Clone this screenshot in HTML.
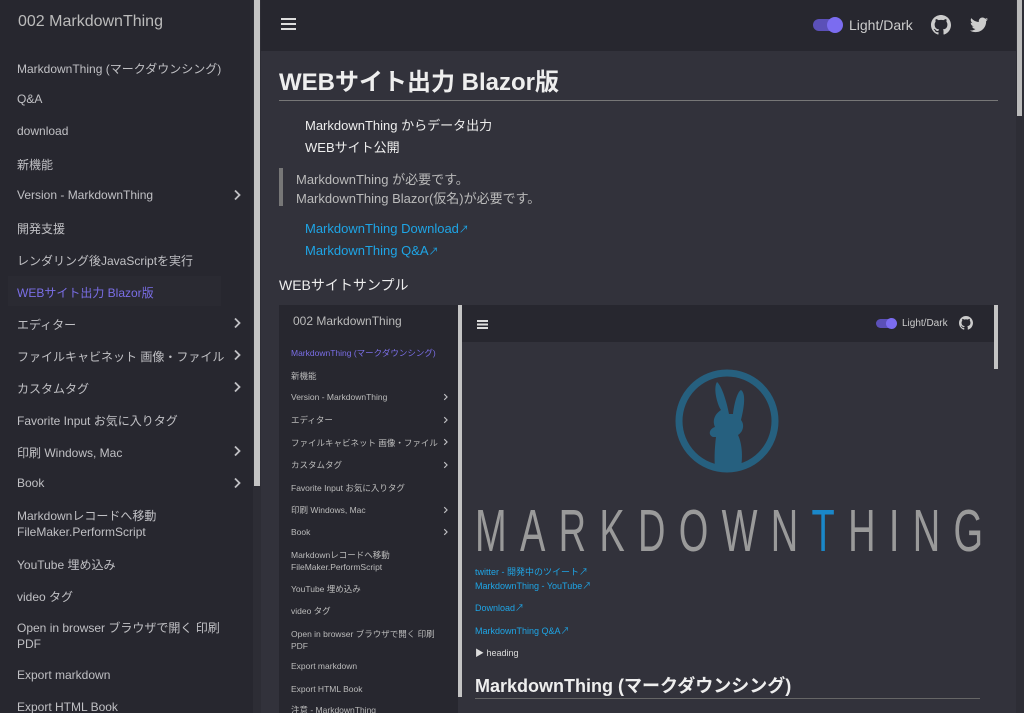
<!DOCTYPE html>
<html><head><meta charset="utf-8"><style>
*{margin:0;padding:0;box-sizing:border-box}
html,body{width:1024px;height:713px;overflow:hidden}
body{background:#32323b;font-family:"Liberation Sans","Noto Sans CJK JP",sans-serif;position:relative;color:#ddd}
.a{position:absolute;white-space:nowrap}
#sb{position:absolute;left:0;top:0;width:253px;height:713px;background:#27272f}
#sbs{position:absolute;left:254px;top:0;width:6px;height:486px;background:#c4c4c4}
#sbt{position:absolute;left:253px;top:0;width:8px;height:713px;background:#2d2d35}
.si{position:absolute;left:17px;font-size:12px;color:#c0c0c4}
.ch{position:absolute;left:233px}
#hd{position:absolute;left:261px;top:0;width:755px;height:51px;background:#27272f}
#rs{position:absolute;left:1016px;top:0;width:8px;height:713px;background:#2d2d35}
#rst{position:absolute;left:1017px;top:0;width:5px;height:116px;background:#bbb}
.lk{color:#1ea5e6}
.is{position:absolute;left:291px;font-size:8.5px;color:#bbb}
.ic{position:absolute;left:443px}
</style></head><body>
<svg width="0" height="0" style="position:absolute"><defs><symbol id="cv" viewBox="0 0 8 12"><path d="M2 1.5l4.5 4.5L2 10.5" fill="none" stroke="#c0c0c4" stroke-width="1.8"/></symbol></defs></svg>
<div id="sb"></div><div id="sbt"></div><div id="sbs"></div>
<div class="a" style="left:18px;top:13px;font-size:16px;color:#bbb">002 MarkdownThing</div>
<div class="a" style="left:8px;top:276px;width:213px;height:30px;background:#2a2a32"></div>
<div class="si a" style="top:60px">MarkdownThing (マークダウンシング)</div>
<div class="si a" style="top:92px">Q&amp;A</div>
<div class="si a" style="top:124px">download</div>
<div class="si a" style="top:156px">新機能</div>
<div class="si a" style="top:188px">Version - MarkdownThing</div><svg class="ch" style="top:189px" width="8" height="12"><use href="#cv"/></svg>
<div class="si a" style="top:220px">開発支援</div>
<div class="si a" style="top:252px">レンダリング後JavaScriptを実行</div>
<div class="si a" style="top:284px;color:#7a6ee6">WEBサイト出力 Blazor版</div>
<div class="si a" style="top:316px">エディター</div><svg class="ch" style="top:317px" width="8" height="12"><use href="#cv"/></svg>
<div class="si a" style="top:348px">ファイルキャビネット 画像・ファイル</div><svg class="ch" style="top:349px" width="8" height="12"><use href="#cv"/></svg>
<div class="si a" style="top:380px">カスタムタグ</div><svg class="ch" style="top:381px" width="8" height="12"><use href="#cv"/></svg>
<div class="si a" style="top:412px">Favorite Input お気に入りタグ</div>
<div class="si a" style="top:444px">印刷 Windows, Mac</div><svg class="ch" style="top:445px" width="8" height="12"><use href="#cv"/></svg>
<div class="si a" style="top:476px">Book</div><svg class="ch" style="top:477px" width="8" height="12"><use href="#cv"/></svg>
<div class="si a" style="top:508px;line-height:16px">Markdownレコードへ移動<br>FileMaker.PerformScript</div>
<div class="si a" style="top:556px">YouTube 埋め込み</div>
<div class="si a" style="top:588px">video タグ</div>
<div class="si a" style="top:620px;line-height:16px">Open in browser ブラウザで開く 印刷<br>PDF</div>
<div class="si a" style="top:668px">Export markdown</div>
<div class="si a" style="top:700px">Export HTML Book</div>

<div id="hd"></div><div id="rs"></div><div id="rst"></div>
<div class="a" style="left:281px;top:18px;width:15px;height:2px;background:#ddd;box-shadow:0 5px 0 #ddd,0 10px 0 #ddd"></div>
<div class="a" style="left:813px;top:19px;width:28px;height:12px;border-radius:6px;background:#5b50b8"></div>
<div class="a" style="left:827px;top:17px;width:16px;height:16px;border-radius:8px;background:#7b6cf0"></div>
<div class="a" style="left:849px;top:17px;font-size:14px;color:#ccc">Light/Dark</div>
<svg class="a" style="left:931px;top:15px" width="20" height="20" viewBox="0 0 16 16"><path fill="#ccc" d="M8 0C3.58 0 0 3.58 0 8c0 3.54 2.29 6.53 5.47 7.59.4.07.55-.17.55-.38 0-.19-.01-.82-.01-1.49-2.01.37-2.53-.49-2.69-.94-.09-.23-.48-.94-.82-1.13-.28-.15-.68-.52-.01-.53.63-.01 1.08.58 1.23.82.72 1.21 1.87.87 2.33.66.07-.52.28-.87.51-1.07-1.78-.2-3.64-.89-3.64-3.95 0-.87.31-1.59.82-2.15-.08-.2-.36-1.02.08-2.12 0 0 .67-.21 2.2.82.64-.18 1.32-.27 2-.27.68 0 1.36.09 2 .27 1.53-1.04 2.2-.82 2.2-.82.44 1.1.16 1.92.08 2.12.51.56.82 1.27.82 2.15 0 3.07-1.87 3.75-3.65 3.95.29.25.54.73.54 1.48 0 1.07-.01 1.93-.01 2.2 0 .21.15.46.55.38A8.013 8.013 0 0016 8c0-4.42-3.58-8-8-8z"/></svg>
<svg class="a" style="left:970px;top:17px" width="18" height="16" viewBox="0 0 24 20"><path fill="#ccc" d="M24 2.4c-.9.4-1.8.6-2.8.8 1-.6 1.8-1.6 2.200-2.7-1 .6-2 1-3.1 1.2C19.4.7 18.1 0 16.6 0c-2.7 0-4.9 2.2-4.9 4.9 0 .4 0 .8.1 1.1C7.7 5.8 4.1 3.9 1.7.9c-.4.7-.7 1.6-.7 2.5 0 1.7.9 3.2 2.2 4.1-.8 0-1.6-.2-2.2-.6v.1c0 2.4 1.7 4.4 3.9 4.8-.4.1-.8.2-1.3.2-.3 0-.6 0-.9-.1.6 2 2.4 3.4 4.6 3.4-1.7 1.3-3.8 2.1-6.1 2.1-.4 0-.8 0-1.2-.1 2.2 1.4 4.8 2.2 7.5 2.2 9.1 0 14-7.5 14-14v-.6c1-.7 1.8-1.6 2.5-2.500z"/></svg>

<div class="a" style="left:279px;top:62px;font-size:24px;font-weight:bold;color:#eee">WEBサイト出力 Blazor版</div>
<div class="a" style="left:279px;top:100px;width:719px;height:1px;background:#777"></div>
<div class="a" style="left:305px;top:115px;font-size:13px;color:#eee">MarkdownThing からデータ出力</div>
<div class="a" style="left:305px;top:137px;font-size:13px;color:#eee">WEBサイト公開</div>
<div class="a" style="left:279px;top:168px;width:4px;height:38px;background:#777"></div>
<div class="a" style="left:296px;top:170px;font-size:13px;color:#bbb;line-height:19px">MarkdownThing が必要です。<br>MarkdownThing Blazor(仮名)が必要です。</div>
<div class="a lk" style="left:305px;top:221px;font-size:13px">MarkdownThing Download<span style="font-size:10px">↗</span></div>
<div class="a lk" style="left:305px;top:243px;font-size:13px">MarkdownThing Q&amp;A<span style="font-size:10px">↗</span></div>
<div class="a" style="left:279px;top:275px;font-size:14px;color:#eee">WEBサイトサンプル</div>

<!-- inner screenshot -->
<div class="a" style="left:279px;top:305px;width:719px;height:408px;background:#32323b;overflow:hidden">
</div>
<div class="a" style="left:279px;top:305px;width:179px;height:408px;background:#27272f"></div>
<div class="a" style="left:458px;top:305px;width:4px;height:392px;background:#c4c4c4"></div>
<div class="a" style="left:462px;top:305px;width:532px;height:37px;background:#27272f"></div>
<div class="a" style="left:994px;top:305px;width:4px;height:64px;background:#c4c4c4"></div>
<div class="a" style="left:293px;top:314px;font-size:12px;color:#bbb">002 MarkdownThing</div>
<div class="is a" style="top:347px;color:#7a6ee6">MarkdownThing (マークダウンシング)</div>
<div class="is a" style="top:370px">新機能</div>
<div class="is a" style="top:392px">Version - MarkdownThing</div><svg class="ic" style="top:393px" width="5" height="8"><use href="#cv"/></svg>
<div class="is a" style="top:414px">エディター</div><svg class="ic" style="top:416px" width="5" height="8"><use href="#cv"/></svg>
<div class="is a" style="top:437px">ファイルキャビネット 画像・ファイル</div><svg class="ic" style="top:438px" width="5" height="8"><use href="#cv"/></svg>
<div class="is a" style="top:459px">カスタムタグ</div><svg class="ic" style="top:461px" width="5" height="8"><use href="#cv"/></svg>
<div class="is a" style="top:482px">Favorite Input お気に入りタグ</div>
<div class="is a" style="top:504px">印刷 Windows, Mac</div><svg class="ic" style="top:506px" width="5" height="8"><use href="#cv"/></svg>
<div class="is a" style="top:527px">Book</div><svg class="ic" style="top:528px" width="5" height="8"><use href="#cv"/></svg>
<div class="is a" style="top:549px;line-height:12px">Markdownレコードへ移動<br>FileMaker.PerformScript</div>
<div class="is a" style="top:583px">YouTube 埋め込み</div>
<div class="is a" style="top:605px">video タグ</div>
<div class="is a" style="top:628px;line-height:12px">Open in browser ブラウザで開く 印刷<br>PDF</div>
<div class="is a" style="top:661px">Export markdown</div>
<div class="is a" style="top:684px">Export HTML Book</div>
<div class="is a" style="top:704px">注意 - MarkdownThing</div>
<div class="a" style="left:477px;top:320px;width:11px;height:1.5px;background:#ddd;box-shadow:0 3.5px 0 #ddd,0 7px 0 #ddd"></div>
<div class="a" style="left:876px;top:319px;width:20px;height:9px;border-radius:5px;background:#5b50b8"></div>
<div class="a" style="left:886px;top:318px;width:11px;height:11px;border-radius:6px;background:#7b6cf0"></div>
<div class="a" style="left:902px;top:318px;font-size:10px;color:#ccc">Light/Dark</div>
<svg class="a" style="left:959px;top:316px" width="14" height="14" viewBox="0 0 16 16"><path fill="#ccc" d="M8 0C3.58 0 0 3.58 0 8c0 3.54 2.29 6.53 5.47 7.59.4.07.55-.17.55-.38 0-.19-.01-.82-.01-1.49-2.01.37-2.53-.49-2.69-.94-.09-.23-.48-.94-.82-1.13-.28-.15-.68-.52-.01-.53.63-.01 1.08.58 1.23.82.72 1.21 1.87.87 2.33.66.07-.52.28-.87.51-1.07-1.78-.2-3.64-.89-3.64-3.95 0-.87.31-1.59.82-2.15-.08-.2-.36-1.02.08-2.12 0 0 .67-.21 2.2.82.64-.18 1.32-.27 2-.27.68 0 1.36.09 2 .27 1.53-1.04 2.2-.82 2.2-.82.44 1.1.16 1.92.08 2.12.51.56.82 1.27.82 2.15 0 3.07-1.87 3.75-3.65 3.95.29.25.54.73.54 1.48 0 1.07-.01 1.93-.01 2.2 0 .21.15.46.55.38A8.013 8.013 0 0016 8c0-4.42-3.58-8-8-8z"/></svg>
<svg class="a" style="left:674px;top:368px" width="106" height="106" viewBox="0 0 106 106"><circle cx="53" cy="53" r="48" fill="none" stroke="#26607f" stroke-width="7"/><path fill="#26607f" d="M43 14c-4 6 0 22 4 28-6 4-9 10-6 17-6 2-7 8-2 10l3 0c-1 8-2 20-1 30h26c2-10 1-24-3-32 5-3 7-10 3-15 2-8 6-26 0-30-4 2-7 15-8 24h-4C53 35 48 18 43 14z"/></svg>
<svg class="a" style="left:470px;top:495px" width="520" height="62">
<g transform="scale(1,1.55)" font-family="Liberation Sans, sans-serif" font-size="38" fill="#9a9a9a" font-weight="normal">
<text x="5" y="36" textLength="508" lengthAdjust="spacing" style="font-stretch:condensed">MARKDOWN<tspan fill="#1a87c8">T</tspan>HING</text>
</g></svg>
<div class="a lk" style="left:475px;top:565px;font-size:9px;line-height:14px">twitter - 開発中のツイート↗<br>MarkdownThing - YouTube↗</div>
<div class="a lk" style="left:475px;top:601px;font-size:9px">Download↗</div>
<div class="a lk" style="left:475px;top:624px;font-size:9px">MarkdownThing Q&amp;A↗</div>
<div class="a" style="left:475px;top:646px;font-size:9px;color:#ddd">▶ heading</div>
<div class="a" style="left:475px;top:672px;font-size:18px;font-weight:bold;color:#eee">MarkdownThing (マークダウンシング)</div>
<div class="a" style="left:475px;top:698px;width:505px;height:1px;background:#666"></div>
</body></html>
